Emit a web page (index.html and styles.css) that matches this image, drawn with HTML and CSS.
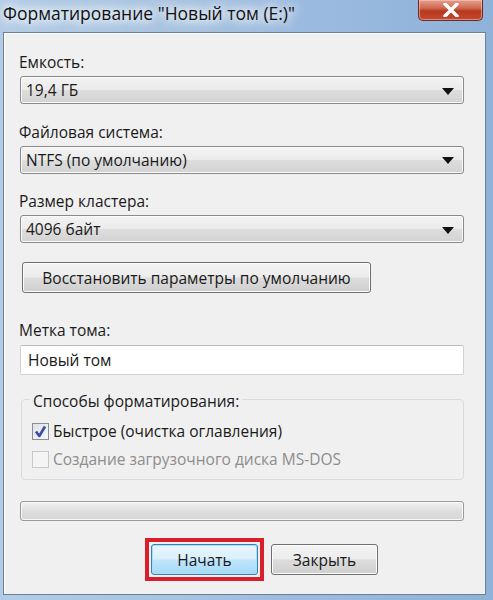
FILE: index.html
```html
<!DOCTYPE html>
<html lang="ru">
<head>
<meta charset="utf-8">
<link rel="stylesheet" href="styles.css">
</head>
<body>
<div class="window">
  <div class="titlebar">
    <div class="title">Форматирование "Новый том (E:)"</div>
    <div class="close"><svg width="20" height="14" viewBox="0 0 20 14"><path d="M4 1 L16 13 M16 1 L4 13" stroke="#fff" stroke-width="3.4" stroke-linecap="round"/></svg></div>
  </div>
  <div class="client">
    <div class="label">Емкость:</div>
    <div class="combo"><span>19,4 ГБ</span><span class="arrow"></span></div>
    <div class="label">Файловая система:</div>
    <div class="combo"><span>NTFS (по умолчанию)</span><span class="arrow"></span></div>
    <div class="label">Размер кластера:</div>
    <div class="combo"><span>4096 байт</span><span class="arrow"></span></div>
    <div class="btn restore">Восстановить параметры по умолчанию</div>
    <div class="label label-vol">Метка тома:</div>
    <div class="input">Новый том</div>
    <div class="group">
      <div class="legend">Способы форматирования:</div>
      <div class="check"><span class="box checked"><svg width="13" height="13" viewBox="0 0 13 13"><path d="M2 6.5 L5.3 11 L11 1.5" fill="none" stroke="#3a4ea0" stroke-width="2.6" stroke-linejoin="round"/></svg></span><span>Быстрое (очистка оглавления)</span></div>
      <div class="check disabled"><span class="box"></span><span>Создание загрузочного диска MS-DOS</span></div>
    </div>
    <div class="progress"></div>
    <div class="actions">
      <div class="highlight"><div class="btn default">Начать</div></div>
      <div class="btn">Закрыть</div>
    </div>
  </div>
</div>
</body>
</html>
```
FILE: styles.css
```css
html, body {
  margin: 0;
  padding: 0;
}
body {
  width: 493px;
  height: 600px;
  overflow: hidden;
  font-family: "Open Sans", "Noto Sans", sans-serif;
  color: #1a1a1a;
}
.window {
  width: 493px;
  height: 600px;
  box-sizing: border-box;
  display: flex;
  flex-direction: column;
  background: linear-gradient(90deg, #b3cce6 0%, #a6c2e0 40%, #9cbbe0 60%, #8fb2d8 100%);
  padding: 0 7px 5px 3px;
}
.titlebar {
  height: 32px;
  flex: none;
  display: flex;
  align-items: flex-start;
  justify-content: space-between;
}
.title {
  font-size: 17.5px;
  line-height: 20px;
  margin-top: 3px;
  color: #111;
  text-shadow: 0 0 8px #fff, 0 0 12px #fff, 0 0 16px #eaf2fb;
}
.close {
  width: 65px;
  height: 21px;
  margin-right: 3px;
  box-sizing: border-box;
  border: 1px solid #6b2a22;
  border-top: none;
  border-radius: 0 0 5px 5px;
  background: linear-gradient(180deg, #e4a08e 0%, #cf6a52 40%, #b8381f 55%, #c14a2f 100%);
  display: flex;
  align-items: center;
  justify-content: center;
  box-shadow: inset 0 0 0 1px rgba(255, 210, 200, 0.5);
}
.client {
  flex: 1;
  background: #f0f0f0;
  border: 1px solid #6d7f94;
  box-shadow: inset 1px 1px 0 #fdfdfd;
  padding: 19px 21px 0 15px;
  display: flex;
  flex-direction: column;
}
.label {
  font-size: 15.5px;
  line-height: 20px;
  height: 20px;
}
.label-vol {
  margin-top: 27px;
}
.combo {
  margin: 4px 0 17.5px 1px;
  height: 28px;
  box-sizing: border-box;
  border: 1px solid #8a8a8a;
  border-radius: 3px;
  background: linear-gradient(180deg, #f3f3f3 0%, #ebebeb 48%, #dddddd 52%, #d3d3d3 100%);
  box-shadow: inset 0 0 0 1px #fbfbfb;
  display: flex;
  align-items: center;
  justify-content: space-between;
  padding: 0 9px 0 5px;
  font-size: 15.5px;
}
.arrow {
  width: 0;
  height: 0;
  border-left: 6px solid transparent;
  border-right: 6px solid transparent;
  border-top: 7px solid #111;
  margin-top: 2px;
}
.btn {
  height: 31px;
  box-sizing: border-box;
  border: 1px solid #707070;
  border-radius: 3px;
  background: linear-gradient(180deg, #f4f4f4 0%, #ececec 48%, #dcdcdc 52%, #cfcfcf 100%);
  box-shadow: inset 0 0 0 1px #fcfcfc;
  display: flex;
  align-items: center;
  justify-content: center;
  font-size: 15.5px;
}
.restore {
  width: 349px;
  margin: 1.5px 0 0 3px;
}
.input {
  margin: 5px 0 0 1px;
  height: 30px;
  box-sizing: border-box;
  border: 1px solid #cfd3d8;
  border-top-color: #b8bcc2;
  border-radius: 2px;
  background: #fff;
  display: flex;
  align-items: center;
  padding-left: 7px;
  font-size: 15.5px;
}
.group {
  margin: 24px 0 0 2px;
  height: 81px;
  box-sizing: border-box;
  border: 1px solid #d8dcdf;
  border-radius: 4px;
  position: relative;
  padding: 21px 0 0 10px;
}
.legend {
  position: absolute;
  top: -9px;
  left: 8px;
  padding: 0 3px;
  background: #f0f0f0;
  font-size: 15.5px;
  line-height: 20px;
}
.check {
  display: flex;
  align-items: center;
  gap: 4px;
  font-size: 15.5px;
  height: 20px;
  margin-bottom: 8px;
}
.box {
  width: 17px;
  height: 17px;
  box-sizing: border-box;
  border: 1px solid #8e8f8f;
  background: linear-gradient(135deg, #dfe3e8 0%, #f6f7f9 100%);
  display: flex;
  align-items: center;
  justify-content: center;
}
.disabled {
  color: #8d8d8d;
}
.disabled .box {
  border-color: #c8c8c8;
  background: #f4f4f4;
}
.progress {
  margin: 21px 0 0 1px;
  height: 20px;
  box-sizing: border-box;
  border: 1px solid #9a9a9a;
  border-radius: 3px;
  background: linear-gradient(180deg, #f2f2f2 0%, #dedede 50%, #d6d6d6 100%);
  box-shadow: inset 0 0 0 1px #f8f8f8;
}
.actions {
  display: flex;
  gap: 7px;
  align-items: center;
  margin: 17px 0 0 126px;
}
.highlight {
  border: 4px solid #d81f2a;
  padding: 2px;
}
.actions .btn {
  width: 107px;
}
.btn.default {
  border-color: #3c7fb1;
  background: linear-gradient(180deg, #eaf6fd 0%, #d9f0fc 48%, #bee6fd 52%, #a7d9f5 100%);
  box-shadow: inset 0 0 0 1px #9ee3fb;
}
```
